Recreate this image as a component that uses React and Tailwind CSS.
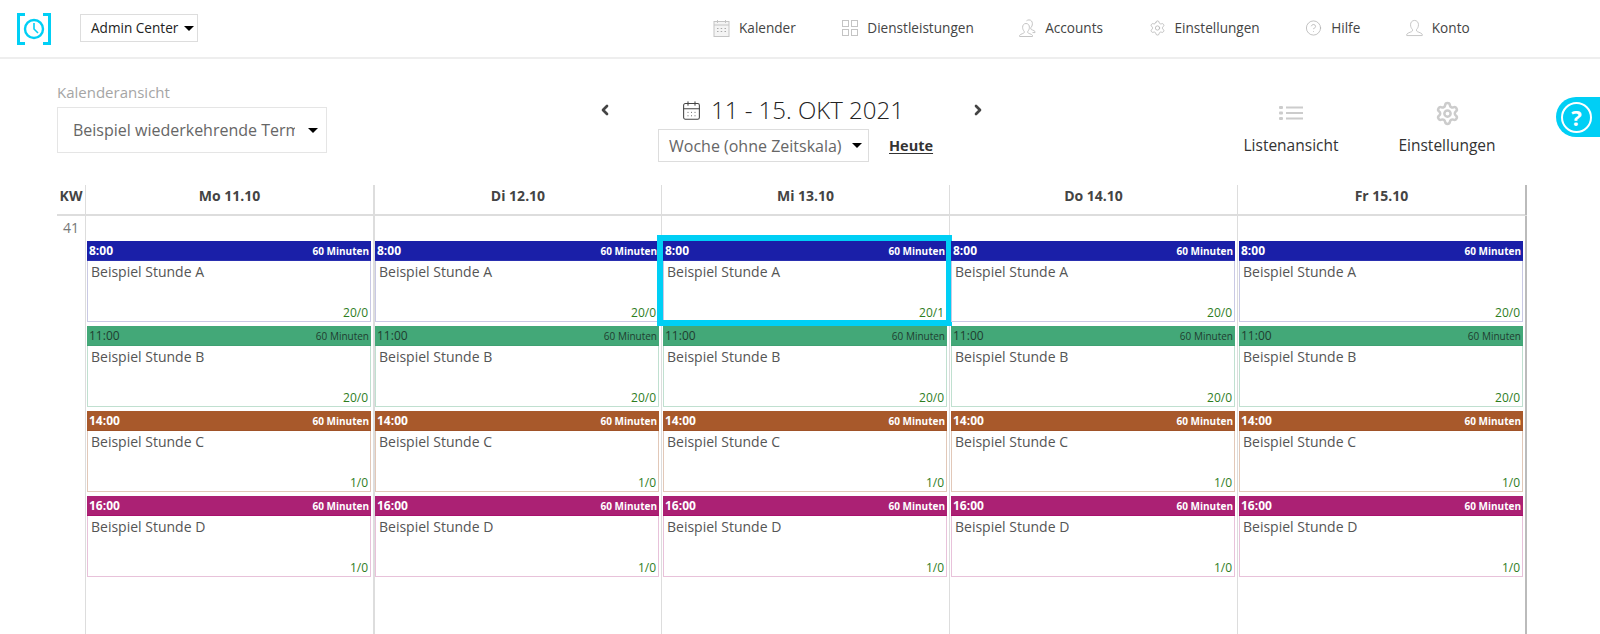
import { CalendarDays, ChevronLeft, ChevronRight, CircleHelp, Settings } from "lucide-react";

const CalIcon = () => (
  <svg width="17" height="18" viewBox="0 0 17 18" fill="none" stroke="#c4c4c4">
    <rect x="1" y="2.5" width="15" height="15" fill="#f4f4f4" />
    <path d="M1 6H16M4.5 1V4M12.5 1V4" />
    <path d="M4 9.5h1.5M7.7 9.5h1.5M11.5 9.5h1.5M4 12.5h1.5M7.7 12.5h1.5M11.5 12.5h1.5" stroke="#aaaaaa" />
  </svg>
);

const GridIcon = () => (
  <svg width="16" height="16" viewBox="0 0 16 16" fill="none" stroke="#c4c4c4">
    <rect x="0.5" y="0.5" width="6" height="6" />
    <rect x="9.5" y="0.5" width="6" height="6" />
    <rect x="0.5" y="9.5" width="6" height="6" />
    <rect x="9.5" y="9.5" width="6" height="6" />
  </svg>
);

const AccountsIcon = () => (
  <svg width="17" height="18" viewBox="0 0 17 18" fill="none" stroke="#c4c4c4">
    <path d="M7 4.5c2.2 0 3.4 1.7 3.4 3.8 0 1.8-.8 3.2-1.6 4v1.3c0 .9 3.7 1.2 4.7 2.8v1.1H.6v-1.1c1-1.6 4.6-1.9 4.6-2.8v-1.3c-.8-.8-1.6-2.2-1.6-4C3.6 6.2 4.8 4.5 7 4.5z" />
    <path d="M7.5 1.8c.7-.6 1.6-.9 2.5-.9 2.2 0 3.4 1.7 3.4 3.8 0 1.8-.8 3.2-1.6 4v1.3c0 .8 3.2 1.1 4.2 2.5v1.1h-2.5" />
  </svg>
);

const KontoIcon = () => (
  <svg width="18" height="18" viewBox="0 0 18 18" fill="none" stroke="#c4c4c4">
    <path d="M9 1c2.6 0 4.2 2 4.2 4.6 0 2.2-1 3.9-2 4.9v1.6c0 1 4.5 1.5 6 3.5V17H.8v-1.4c1.5-2 6-2.5 6-3.5v-1.6c-1-1-2-2.7-2-4.9C4.8 3 6.4 1 9 1z" />
  </svg>
);

const GearIcon = () => <Settings size={18} strokeWidth={1} color="#aaaaaa" />;
const HelpIcon = () => <CircleHelp size={18} strokeWidth={1} color="#aaaaaa" />;

const navItems = [
  { label: "Kalender", icon: CalIcon },
  { label: "Dienstleistungen", icon: GridIcon },
  { label: "Accounts", icon: AccountsIcon },
  { label: "Einstellungen", icon: GearIcon },
  { label: "Hilfe", icon: HelpIcon },
  { label: "Konto", icon: KontoIcon },
];

const days = ["Mo 11.10", "Di 12.10", "Mi 13.10", "Do 14.10", "Fr 15.10"];

const lessons = [
  { time: "8:00", name: "Beispiel Stunde A", count: "20/0", head: "bg-[#1a1fa8] text-white border-[#2a2fb0]", body: "border-[#c9c9e4]", bold: "font-bold" },
  { time: "11:00", name: "Beispiel Stunde B", count: "20/0", head: "bg-[#43a878] text-[#1f3d30] border-[#3fa072]", body: "border-[#c0e0d0]", bold: "" },
  { time: "14:00", name: "Beispiel Stunde C", count: "1/0", head: "bg-[#a8592b] text-white border-[#a05228]", body: "border-[#e2c8b8]", bold: "font-bold" },
  { time: "16:00", name: "Beispiel Stunde D", count: "1/0", head: "bg-[#ab2174] text-white border-[#a8106c]", body: "border-[#e8c2da]", bold: "font-bold" },
];

const Caret = () => (
  <span className="inline-block w-0 h-0 border-x-[5px] border-x-transparent border-t-[5px] border-t-black" />
);

const Logo = () => (
  <svg width="34" height="32" viewBox="0 0 34 32" fill="none" stroke="#00cff5">
    <path d="M8 1.5H1.5V30.5H8M26 1.5H32.5V30.5H26" strokeWidth="3" />
    <circle cx="17" cy="16" r="9" strokeWidth="2.4" />
    <path d="M17 10V16L21 20" strokeWidth="1.6" />
  </svg>
);

const ListIcon = () => (
  <svg width="24" height="14" viewBox="0 0 24 14" fill="#cccccc">
    <rect x="0" y="0" width="4" height="3" rx="1" />
    <rect x="0" y="5.5" width="4" height="3" rx="1" />
    <rect x="0" y="11" width="4" height="3" rx="1" />
    <rect x="7" y="0.5" width="17" height="2" />
    <rect x="7" y="6" width="17" height="2" />
    <rect x="7" y="11.5" width="17" height="2" />
  </svg>
);

const LessonCard = ({ lesson, count, active }) => (
  <div className="relative h-[81px]">
    <div className={`h-full flex flex-col border ${lesson.body}`}>
      <div className={`h-[20px] -mx-px -mt-px flex items-center justify-between pt-[1px] px-[2px] border-b ${lesson.head} ${lesson.bold}`}>
        <span className="text-[12px]">{lesson.time}</span>
        <span className="text-[10px]">60 Minuten</span>
      </div>
      <div className="flex-1 flex flex-col justify-between pl-[3px] pr-[2px] pb-[1px]">
        <div className="text-[14px] text-[#555] pt-[1px] leading-[19px]">{lesson.name}</div>
        <div className="text-[12px] text-[#2e7d1e] text-right leading-[15px]">{count}</div>
      </div>
    </div>
    {active && (
      <div className="absolute -left-[6px] -top-[6px] -right-[5px] -bottom-[4px] border-[6px] border-[#00cff5]" />
    )}
  </div>
);

const App = () => {
  return (
    <div className="w-[1600px] h-[634px] overflow-hidden bg-white relative font-['Open_Sans',sans-serif] text-[#333]">
      <header className="h-[59px] border-b-2 border-[#eeeeee] flex items-start">
        <div className="ml-[17px] mt-[13px]">
          <Logo />
        </div>
        <button className="ml-[29px] mt-[14px] w-[118px] h-[28px] border border-[#dddddd] flex items-center pl-[10px] gap-[6px] text-[13.6px] text-[#222]">
          <span className="pt-[1px]">Admin Center</span>
          <Caret />
        </button>
        <nav className="ml-[515px] h-full flex items-center gap-[45.5px]">
          {navItems.map((item) => (
            <div key={item.label} className="flex items-center gap-[9px] text-[13.6px] text-[#444]">
              <div className="w-[17px] flex justify-center"><item.icon /></div>
              <span>{item.label}</span>
            </div>
          ))}
        </nav>
      </header>

      <div className="h-[126px] flex">
        <div className="ml-[57px] w-[270px] pt-[23px]">
          <div className="text-[15px] leading-[20px] text-[#a5a5a5]">Kalenderansicht</div>
          <div className="mt-[5px] h-[46px] border border-[#e5e5e5] flex items-center pl-[15px] pr-[8px] justify-between">
            <span className="w-[222px] overflow-hidden whitespace-nowrap text-[16px] text-[#666]">Beispiel wiederkehrende Termine</span>
            <Caret />
          </div>
        </div>

        <div className="ml-[270px] flex pt-[42px] items-start">
          <ChevronLeft size={16} strokeWidth={4} className="text-[#444] mt-[1px]" />
          <div className="ml-[45px] w-[312px] -mt-[5px]">
            <div className="flex items-center gap-[9px] ml-[23px] h-[28px]">
              <CalendarDays size={21} strokeWidth={1.2} className="text-[#444]" />
              <span className="text-[24px] leading-[28px] font-light text-[#222]">11 - 15. OKT 2021</span>
            </div>
            <div className="flex items-center mt-[5px]">
              <div className="w-[211px] h-[33px] border border-[#dddddd] flex items-center pl-[10px] pr-[6px] justify-between text-[16px] text-[#666]">
                Woche (ohne Zeitskala)
                <Caret />
              </div>
              <span className="ml-[20px] text-[14.5px] font-bold underline underline-offset-2 text-[#333]">Heute</span>
            </div>
          </div>
          <ChevronRight size={16} strokeWidth={4} className="text-[#444] mt-[1px]" />
        </div>

        <div className="ml-[245px] flex pt-[44px]">
          <div className="w-[120px] flex flex-col items-center">
            <div className="h-[20px] flex items-center"><ListIcon /></div>
            <span className="mt-[11px] text-[15.5px]">Listenansicht</span>
          </div>
          <div className="ml-[36px] w-[120px] flex flex-col items-center">
            <div className="h-[20px] flex items-center"><Settings size={25} strokeWidth={2.4} color="#cccccc" /></div>
            <span className="mt-[11px] text-[15.5px]">Einstellungen</span>
          </div>
        </div>
      </div>

      <div className="ml-[57px] w-[1470px]">
        <div className="grid grid-cols-[28px_repeat(4,288px)_290px] h-[31px] border-b-2 border-[#dddddd]">
          <div className="flex items-center justify-center pb-[9px] text-[14px] font-bold text-[#444]">KW</div>
          {days.map((day, i) => (
            <div
              key={day}
              className={`flex items-center justify-center pb-[9px] text-[14px] font-bold text-[#444] border-l border-[#dddddd] ${i === 1 ? "border-l-2 border-[#cccccc]" : ""} ${i === 4 ? "border-r-2 border-r-[#bbbbbb]" : ""}`}
            >
              {day}
            </div>
          ))}
        </div>
        <div className="grid grid-cols-[28px_repeat(4,288px)_290px] h-[420px]">
          <div className="pt-[1px] text-center text-[14px] text-[#777]">41</div>
          {days.map((day, i) => (
            <div
              key={day}
              className={`flex flex-col gap-[4px] pt-[25px] pr-[2px] border-l border-[#dddddd] ${i === 1 ? "border-l-2 border-[#cccccc]" : "pl-[1px]"} ${i === 4 ? "border-r-2 border-r-[#bbbbbb] pr-[1px]" : ""}`}
            >
              {lessons.map((lesson, n) => (
                <LessonCard
                  key={lesson.time}
                  lesson={lesson}
                  active={i === 2 && n === 0}
                  count={i === 2 && n === 0 ? "20/1" : lesson.count}
                />
              ))}
            </div>
          ))}
        </div>
      </div>

      <div className="absolute right-0 top-[97px] w-[44px] h-[40px] rounded-l-[20px] bg-[#00cff5] flex items-center pl-[5px]">
        <div className="w-[31px] h-[31px] rounded-full border-[2px] border-white flex items-center justify-center text-white font-bold text-[22px]">?</div>
      </div>
    </div>
  );
};

export default App;
